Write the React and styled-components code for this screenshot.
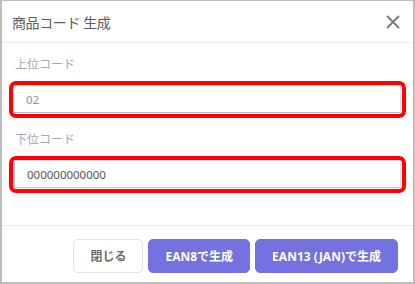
import React from 'react';
import styled, { createGlobalStyle } from 'styled-components';

const Global = createGlobalStyle`
    html, body {
        margin: 0;
        padding: 0;
        background: #ffffff;
    }
    * {
        box-sizing: border-box;
    }
`

const Frame = styled.div`
    width: 415px;
    height: 284px;
    display: flex;
    flex-direction: column;
    border: 2px solid #bcbcbc;
    border-top-width: 1px;
    background: #ffffff;
    font-family: "Noto Sans", "Noto Sans CJK JP", sans-serif;
`

const Header = styled.div`
    height: 42px;
    display: flex;
    align-items: center;
    justify-content: space-between;
    padding: 0 12px 0 10px;
    border-bottom: 1px solid #eceef2;
`

const Title = styled.div`
    font-size: 14px;
    color: #5c5c5c;
    letter-spacing: -0.4px;
`

const Close = styled.button`
    border: 0;
    background: none;
    padding: 0;
    width: 16px;
    height: 16px;
    display: flex;
    align-items: center;
    justify-content: center;
    cursor: pointer;
`

const Body = styled.div`
    flex: 1;
    display: flex;
    flex-direction: column;
    gap: 19px;
    padding: 14px 12px 0 11px;
`

const Field = styled.div`
    display: flex;
    flex-direction: column;
    gap: 12px;
`

const Label = styled.label`
    font-size: 12px;
    line-height: 16px;
    color: #a3a7ba;
    padding-left: 2px;
`

const InputWrap = styled.div`
    position: relative;
`

const Input = styled.input`
    display: block;
    width: 100%;
    height: 28px;
    padding: 0 12px;
    border: 1px solid #dde0e8;
    border-bottom-color: #b9bdca;
    border-left: ${props => props.$focused ? '2px solid #8ccaf4' : '1px solid #dde0e8'};
    border-radius: 2px;
    font-family: "Noto Sans", sans-serif;
    font-size: 11.5px;
    color: ${props => props.$muted ? '#8c91a6' : '#555555'};
    caret-color: #333333;
    outline: none;
    background: #ffffff;
`

const Ring = styled.div`
    position: absolute;
    inset: -4.5px;
    border: 4px solid #ff0000;
    border-radius: 7px;
    pointer-events: none;
`

const Footer = styled.div`
    display: flex;
    justify-content: flex-end;
    gap: 5px;
    padding: 13px 15px 9px 0;
    border-top: 1px solid #e7ebf2;
`

const Button = styled.button`
    height: 34px;
    padding: 0 ${props => props.$pad}px;
    border-radius: 5px;
    font-family: "Noto Sans", "Noto Sans CJK JP", sans-serif;
    font-weight: 700;
    font-size: 12px;
    border: 1px solid ${props => props.$primary ? '#7471e1' : '#dfe3f0'};
    background: ${props => props.$primary ? '#7471e1' : '#ffffff'};
    color: ${props => props.$primary ? '#ffffff' : '#6b6b6b'};
    cursor: pointer;
`

export default function App() {
    return (
        <>
            <Global />
            <Frame>
                <Header>
                    <Title>商品コード 生成</Title>
                    <Close aria-label="close">
                        <svg width="14" height="14" viewBox="0 0 14 14">
                            <path d="M1.5 1.5 L12.5 12.5 M12.5 1.5 L1.5 12.5" stroke="#777777" strokeWidth="1.8" strokeLinecap="round" />
                        </svg>
                    </Close>
                </Header>
                <Body>
                    <Field>
                        <Label>上位コード</Label>
                        <InputWrap>
                            <Input $muted defaultValue="02" readOnly />
                            <Ring />
                        </InputWrap>
                    </Field>
                    <Field>
                        <Label>下位コード</Label>
                        <InputWrap>
                            <Input $focused defaultValue="000000000000" autoFocus />
                            <Ring />
                        </InputWrap>
                    </Field>
                </Body>
                <Footer>
                    <Button $pad={16}>閉じる</Button>
                    <Button $primary $pad={16}>EAN8で生成</Button>
                    <Button $primary $pad={16}>EAN13 (JAN)で生成</Button>
                </Footer>
            </Frame>
        </>
    );
}
